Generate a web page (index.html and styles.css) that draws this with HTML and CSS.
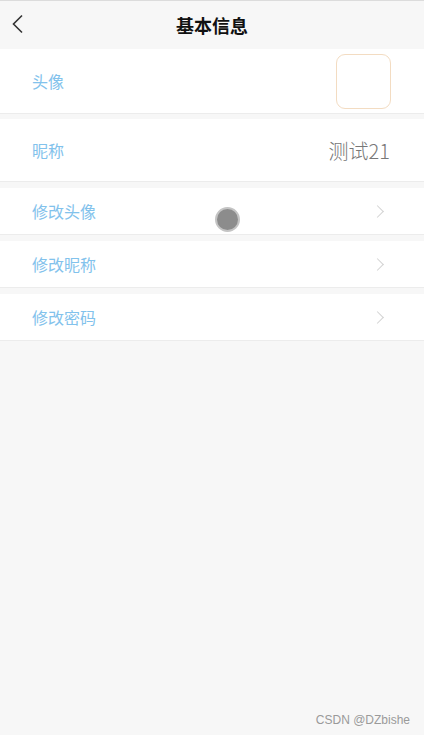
FILE: index.html
```html
<!DOCTYPE html>
<html lang="zh-CN">
<head>
    <meta charset="UTF-8">
    <meta name="viewport" content="width=device-width, initial-scale=1.0">
    <title>基本信息</title>
    <link rel="stylesheet" href="styles.css">
</head>
<body>
<div class="page">
    <header class="nav-bar">
        <span class="nav-back">
            <svg width="14" height="20" viewBox="0 0 14 20">
                <path d="M12 1.5 L3.5 10 L12 18.5" fill="none" stroke="#333" stroke-width="1.6"/>
            </svg>
        </span>
        <h1 class="nav-title">基本信息</h1>
    </header>

    <div class="cell cell-avatar">
        <span class="cell-label">头像</span>
        <div class="avatar-box"></div>
    </div>

    <div class="cell cell-nick">
        <span class="cell-label">昵称</span>
        <span class="cell-value">测试21</span>
    </div>

    <div class="cell cell-link">
        <span class="cell-label">修改头像</span>
        <span class="cell-arrow"></span>
    </div>

    <div class="cell cell-link">
        <span class="cell-label">修改昵称</span>
        <span class="cell-arrow"></span>
    </div>

    <div class="cell cell-link">
        <span class="cell-label">修改密码</span>
        <span class="cell-arrow"></span>
    </div>

    <!-- touch indicator from the screen capture -->
    <div class="touch-dot"></div>

    <div class="watermark">CSDN @DZbishe</div>
</div>
</body>
</html>
```

FILE: styles.css
```css
html, body {
    margin: 0;
    padding: 0;
    height: 100%;
    background-color: #f7f7f7;
    font-family: "Noto Sans CJK SC", "Liberation Sans", sans-serif;
}

.page {
    position: relative;
    min-height: 100%;
    border-top: 1px solid #dcdcdc;
    box-sizing: border-box;
}

.nav-bar {
    position: relative;
    height: 48px;
    display: flex;
    align-items: center;
    justify-content: center;
    background-color: #f7f7f7;
}

.nav-back {
    position: absolute;
    left: 10px;
    top: 13px;
    line-height: 0;
}

.nav-title {
    margin: 0;
    font-size: 18px;
    font-weight: bold;
    color: #111;
}

.cell {
    display: flex;
    align-items: center;
    justify-content: space-between;
    background-color: #ffffff;
    border-bottom: 1px solid #ececec;
    padding: 0 34px 0 32px;
    margin-bottom: 6px;
}

.cell-avatar {
    height: 64px;
    margin-bottom: 5px;
}

.cell-nick {
    height: 62px;
}

.cell-link {
    height: 46px;
}

.cell-label {
    font-size: 16px;
    color: #82c2ec;
}

.cell-value {
    font-size: 20px;
    font-weight: 300;
    color: #777;
}

.avatar-box {
    width: 53px;
    height: 53px;
    border: 1px solid #f3dcc2;
    border-radius: 9px;
    margin-right: -1px;
}

.cell-arrow {
    width: 8px;
    height: 8px;
    border-top: 1.5px solid #d2d2d2;
    border-right: 1.5px solid #d2d2d2;
    transform: rotate(45deg);
    margin-right: 8px;
}

.touch-dot {
    position: absolute;
    left: 215px;
    top: 206px;
    width: 21px;
    height: 21px;
    border-radius: 50%;
    background-color: #8c8c8c;
    border: 2px solid #c4c4c4;
}

.watermark {
    position: absolute;
    right: 14px;
    bottom: 8px;
    font-size: 12px;
    color: #9a9a9a;
    font-family: "Liberation Sans", sans-serif;
}
```
